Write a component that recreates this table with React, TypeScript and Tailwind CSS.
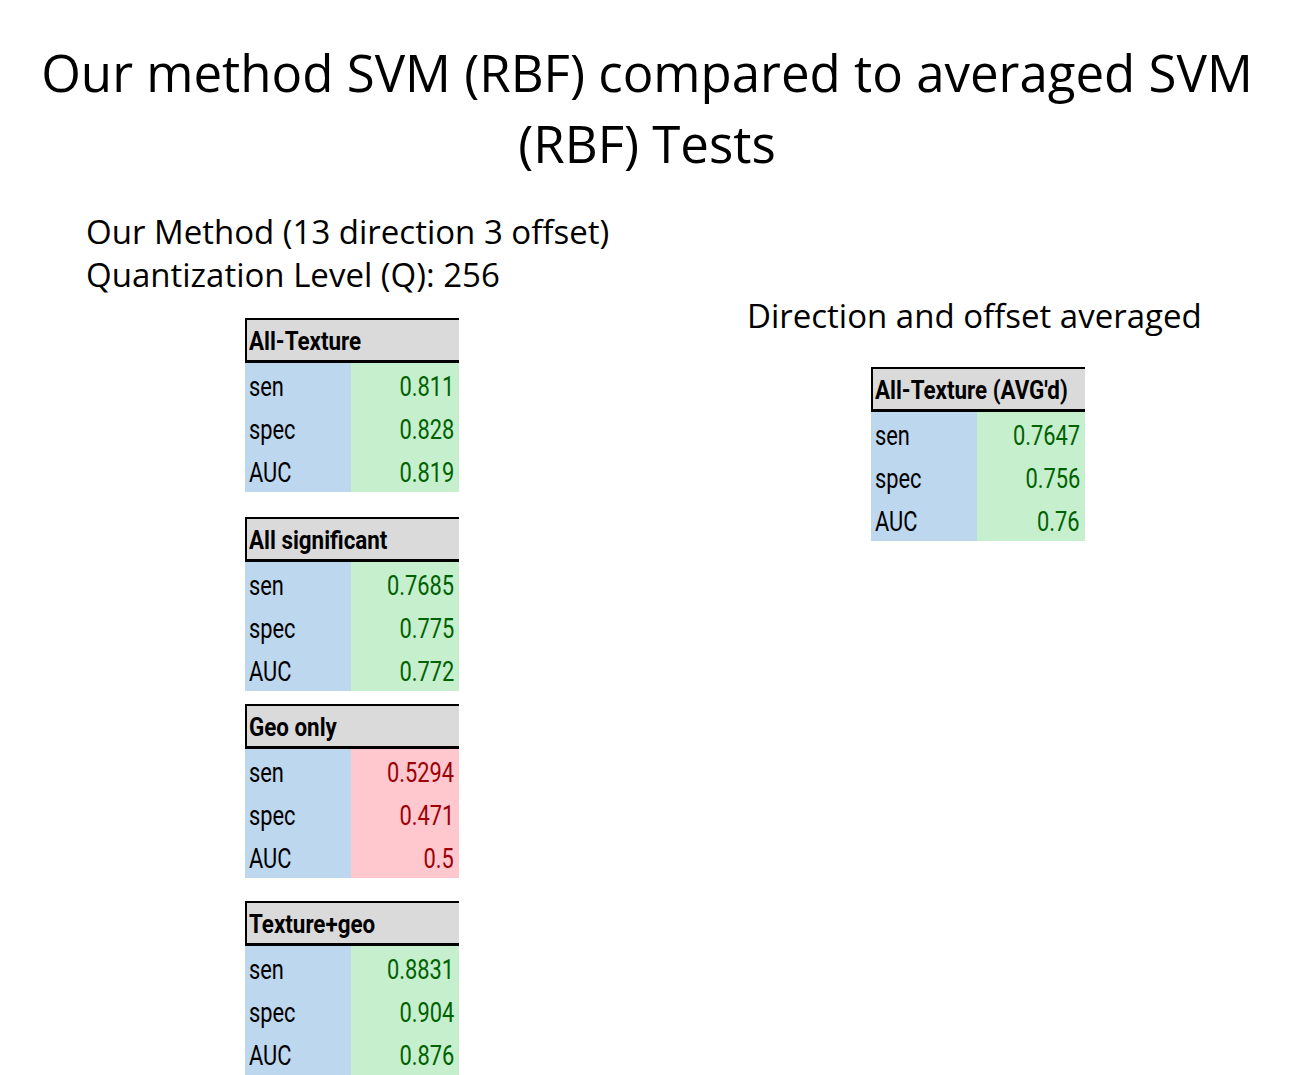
import React from "react";

type Row = { label: string; value: string };
type Tone = "green" | "red";

const narrow = { fontFamily: '"Roboto", "Liberation Sans", sans-serif' };
const humanist = { fontFamily: '"Open Sans", "Noto Sans", sans-serif' };

function DataTable({ title, rows, tone, className }: { title: string; rows: Row[]; tone: Tone; className?: string }) {
  const valueCls =
    tone === "green" ? "bg-[#c6efce] text-[#006100]" : "bg-[#ffc7ce] text-[#9c0006]";
  return (
    <div className={"w-[214px] " + (className ?? "")} style={narrow}>
      <div className="h-[45px] box-border whitespace-nowrap border-t-2 border-l-2 border-b-[3px] border-black bg-[#dadada] pl-[2px] pt-[1px] text-[26px] font-bold leading-[40px] text-black">
        <span className="inline-block origin-left scale-x-[0.86]">{title}</span>
      </div>
      {rows.map((r) => (
        <div key={r.label} className="flex h-[43px] whitespace-nowrap text-[28px] leading-[43px]">
          <div className="w-[106px] bg-[#bdd7ee] pl-[4px] pt-[2px] text-black">
            <span className="inline-block origin-left scale-x-[0.78]">{r.label}</span>
          </div>
          <div className={"flex-1 pr-[5px] pt-[2px] text-right " + valueCls}>
            <span className="inline-block origin-right scale-x-[0.78]">{r.value}</span>
          </div>
        </div>
      ))}
    </div>
  );
}

export default function App() {
  return (
    <div className="w-[1306px] h-[1075px] overflow-hidden bg-white text-black" style={humanist}>
      <div className="pt-[37px] pr-[12px] text-center text-[51px] leading-[71px]">
        <div>Our method SVM (RBF) compared to averaged SVM</div>
        <div>(RBF) Tests</div>
      </div>
      <div className="mt-[31px] flex">
        <div className="w-[747px] pl-[86px]">
          <div className="text-[33px] leading-[43px]">
            <div>Our Method (13 direction 3 offset)</div>
            <div>Quantization Level (Q): 256</div>
          </div>
          <div className="ml-[159px] mt-[22px] flex flex-col">
            <DataTable
              title="All-Texture"
              tone="green"
              rows={[
                { label: "sen", value: "0.811" },
                { label: "spec", value: "0.828" },
                { label: "AUC", value: "0.819" },
              ]}
            />
            <DataTable
              className="mt-[25px]"
              title="All significant"
              tone="green"
              rows={[
                { label: "sen", value: "0.7685" },
                { label: "spec", value: "0.775" },
                { label: "AUC", value: "0.772" },
              ]}
            />
            <DataTable
              className="mt-[13px]"
              title="Geo only"
              tone="red"
              rows={[
                { label: "sen", value: "0.5294" },
                { label: "spec", value: "0.471" },
                { label: "AUC", value: "0.5" },
              ]}
            />
            <DataTable
              className="mt-[23px]"
              title="Texture+geo"
              tone="green"
              rows={[
                { label: "sen", value: "0.8831" },
                { label: "spec", value: "0.904" },
                { label: "AUC", value: "0.876" },
              ]}
            />
          </div>
        </div>
        <div className="flex-1 pt-[84px]">
          <div className="text-[33px] leading-[43px]">Direction and offset averaged</div>
          <div className="ml-[124px] mt-[30px]">
            <DataTable
              title="All-Texture (AVG'd)"
              tone="green"
              rows={[
                { label: "sen", value: "0.7647" },
                { label: "spec", value: "0.756" },
                { label: "AUC", value: "0.76" },
              ]}
            />
          </div>
        </div>
      </div>
    </div>
  );
}
